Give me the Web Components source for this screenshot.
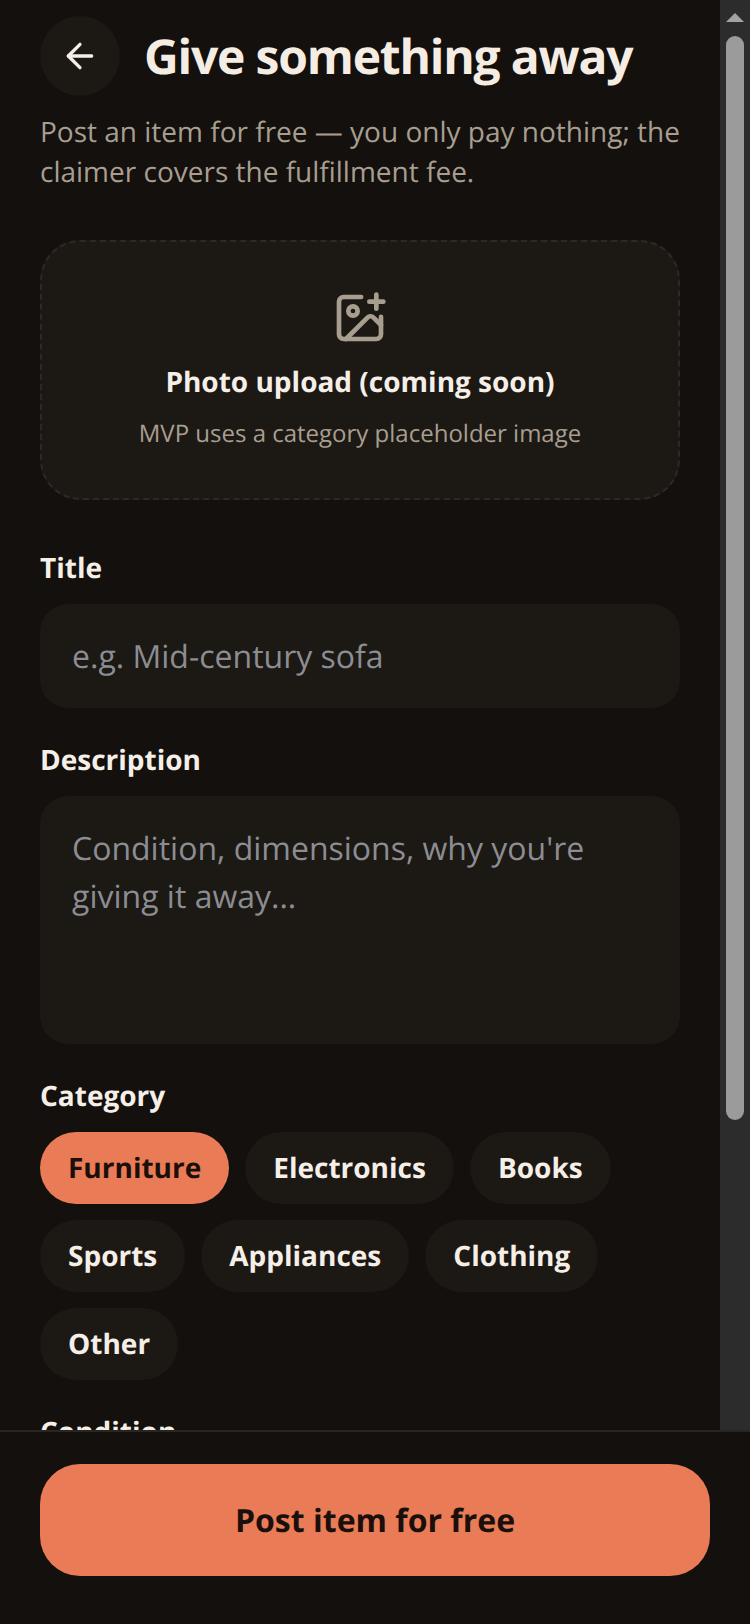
<!DOCTYPE html>
<html lang="en">
<head>
<meta charset="utf-8">
<title>Give something away</title>
<style>
  html, body { margin: 0; height: 100%; background: #13100d; }
  body { font-family: "Open Sans", "Noto Sans", sans-serif; color: #f5efe8; text-rendering: geometricPrecision; }
</style>
</head>
<body>
<app-shell>
  <page-header title="Give something away">Post an item for free — you only pay nothing; the claimer covers the fulfillment fee.</page-header>
  <photo-upload heading="Photo upload (coming soon)">MVP uses a category placeholder image</photo-upload>
  <form-field label="Title"><text-box>e.g. Mid-century sofa</text-box></form-field>
  <form-field label="Description"><text-box multiline>Condition, dimensions, why you're giving it away...</text-box></form-field>
  <form-field label="Category">
    <chip-group>
      <choice-chip selected>Furniture</choice-chip>
      <choice-chip>Electronics</choice-chip>
      <choice-chip>Books</choice-chip>
      <choice-chip>Sports</choice-chip>
      <choice-chip>Appliances</choice-chip>
      <choice-chip>Clothing</choice-chip>
      <choice-chip>Other</choice-chip>
    </chip-group>
  </form-field>
  <form-field label="Condition"></form-field>
  <scroll-rail slot="rail"></scroll-rail>
  <post-bar slot="footer">Post item for free</post-bar>
</app-shell>

<script>
// Page column plus scrollbar rail, footer sits over the bottom of both
class AppShell extends HTMLElement {
  constructor() {
    super();
    this.attachShadow({ mode: 'open' });
    this.shadowRoot.innerHTML = `
      <style>
        :host { display: flex; position: relative; height: 1624px; overflow: hidden; }
        .content {
          flex: 1;
          min-width: 0;
          box-sizing: border-box;
          padding: 16px 40px 0;
          display: flex;
          flex-direction: column;
          gap: 32px;
        }
        .footer { position: absolute; left: 0; right: 0; bottom: 0; }
      </style>
      <div class="content"><slot></slot></div>
      <slot name="rail"></slot>
      <div class="footer"><slot name="footer"></slot></div>
    `;
  }
}

// The page scrollbar, drawn: the headless browser does not paint a real one
class ScrollRail extends HTMLElement {
  constructor() {
    super();
    this.attachShadow({ mode: 'open' });
    this.shadowRoot.innerHTML = `
      <style>
        :host {
          display: flex; flex-direction: column; align-items: center;
          flex: none;
          width: 30px;
          background: #2c2c2c;
        }
        .arrow {
          width: 18px; height: 9px;
          margin-top: 13px;
          background: #a3a3a3;
          clip-path: polygon(50% 0, 100% 100%, 0 100%);
        }
        .thumb {
          width: 18px; height: 1084px;
          margin-top: 14px;
          background: #9b9b9b;
          border-radius: 9px;
        }
      </style>
      <div class="arrow"></div>
      <div class="thumb"></div>
    `;
  }
}

class PageHeader extends HTMLElement {
  constructor() {
    super();
    this.attachShadow({ mode: 'open' });
  }

  connectedCallback() {
    const title = this.getAttribute('title') || '';
    this.shadowRoot.innerHTML = `
      <style>
        :host { display: block; }
        .top { display: flex; align-items: center; gap: 24px; }
        .back {
          width: 80px; height: 80px; border-radius: 50%;
          background: #1c1814;
          display: flex; align-items: center; justify-content: center;
          flex: none;
        }
        svg { width: 40px; height: 40px; fill: none; stroke: #f5efe8; stroke-width: 2; stroke-linecap: round; stroke-linejoin: round; }
        h1 { margin: 0; padding-top: 2px; font-size: 48px; line-height: 64px; font-weight: 700; color: #f5ede3; letter-spacing: -1.2px; }
        p { margin: 16px 0 0; font-size: 28px; line-height: 40px; color: #a89e90; }
      </style>
      <div class="top">
        <div class="back"><svg viewBox="0 0 24 24"><path d="m12 19-7-7 7-7"/><path d="M19 12H5"/></svg></div>
        <h1>${title}</h1>
      </div>
      <p><slot></slot></p>
    `;
  }
}

class PhotoUpload extends HTMLElement {
  constructor() {
    super();
    this.attachShadow({ mode: 'open' });
  }

  connectedCallback() {
    const heading = this.getAttribute('heading') || '';
    this.shadowRoot.innerHTML = `
      <style>
        :host {
          display: flex; flex-direction: column; align-items: center;
          box-sizing: border-box;
          height: 260px;
          margin: 16px 0 16px;
          padding-top: 48px;
          background: #1c1814;
          border: 2px dashed #2e2924;
          border-radius: 40px;
        }
        svg { width: 56px; height: 56px; fill: none; stroke: #a89e90; stroke-width: 2; stroke-linecap: round; stroke-linejoin: round; }
        .heading { margin-top: 16px; font-size: 28px; line-height: 40px; font-weight: 700; color: #f5efe8; }
        .note { margin-top: 14px; font-size: 24px; line-height: 36px; color: #a89e90; }
      </style>
      <svg viewBox="0 0 24 24">
        <path d="M16 5h6"/><path d="M19 2v6"/>
        <path d="M21 11.5V19a2 2 0 0 1-2 2H5a2 2 0 0 1-2-2V5a2 2 0 0 1 2-2h7.5"/>
        <path d="m21 15-3.086-3.086a2 2 0 0 0-2.828 0L6 21"/>
        <circle cx="9" cy="9" r="2"/>
      </svg>
      <div class="heading">${heading}</div>
      <div class="note"><slot></slot></div>
    `;
  }
}

class FormField extends HTMLElement {
  constructor() {
    super();
    this.attachShadow({ mode: 'open' });
  }

  connectedCallback() {
    const label = this.getAttribute('label') || '';
    this.shadowRoot.innerHTML = `
      <style>
        :host { display: flex; flex-direction: column; gap: 16px; }
        .label { font-size: 28px; line-height: 40px; font-weight: 700; color: #f5efe8; }
      </style>
      <div class="label">${label}</div>
      <slot></slot>
    `;
  }
}

class TextBox extends HTMLElement {
  constructor() {
    super();
    this.attachShadow({ mode: 'open' });
    this.shadowRoot.innerHTML = `
      <style>
        :host {
          display: block;
          box-sizing: border-box;
          height: 104px;
          padding: 29px 32px 0;
          background: #1c1814;
          border-radius: 28px;
          font-size: 32px;
          line-height: 48px;
          color: #8b8d92;
        }
        :host([multiline]) { height: 248px; }
      </style>
      <slot></slot>
    `;
  }
}

class ChipGroup extends HTMLElement {
  constructor() {
    super();
    this.attachShadow({ mode: 'open' });
    this.shadowRoot.innerHTML = `
      <style>:host { display: flex; flex-wrap: wrap; gap: 16px; }</style>
      <slot></slot>
    `;
  }
}

class ChoiceChip extends HTMLElement {
  constructor() {
    super();
    this.attachShadow({ mode: 'open' });
    this.shadowRoot.innerHTML = `
      <style>
        :host {
          display: flex; align-items: center;
          box-sizing: border-box;
          height: 72px;
          padding: 0 28px;
          border-radius: 36px;
          background: #1c1814;
          color: #f5efe8;
          font-size: 28px;
          font-weight: 700;
        }
        :host([selected]) { background: #e97b56; color: #1a0f0a; }
      </style>
      <slot></slot>
    `;
  }
}

class PostBar extends HTMLElement {
  constructor() {
    super();
    this.attachShadow({ mode: 'open' });
    this.shadowRoot.innerHTML = `
      <style>
        :host {
          display: block;
          padding: 32px 40px 48px;
          background: #13100d;
          border-top: 2px solid #2a2520;
        }
        .btn {
          box-sizing: border-box;
          height: 112px;
          display: flex; align-items: center; justify-content: center;
          background: #e97b56;
          border-radius: 40px;
          color: #1a0f0a;
          font-size: 32px;
          font-weight: 700;
        }
      </style>
      <div class="btn"><slot></slot></div>
    `;
  }
}

customElements.define('app-shell', AppShell);
customElements.define('scroll-rail', ScrollRail);
customElements.define('page-header', PageHeader);
customElements.define('photo-upload', PhotoUpload);
customElements.define('form-field', FormField);
customElements.define('text-box', TextBox);
customElements.define('chip-group', ChipGroup);
customElements.define('choice-chip', ChoiceChip);
customElements.define('post-bar', PostBar);
</script>
</body>
</html>
